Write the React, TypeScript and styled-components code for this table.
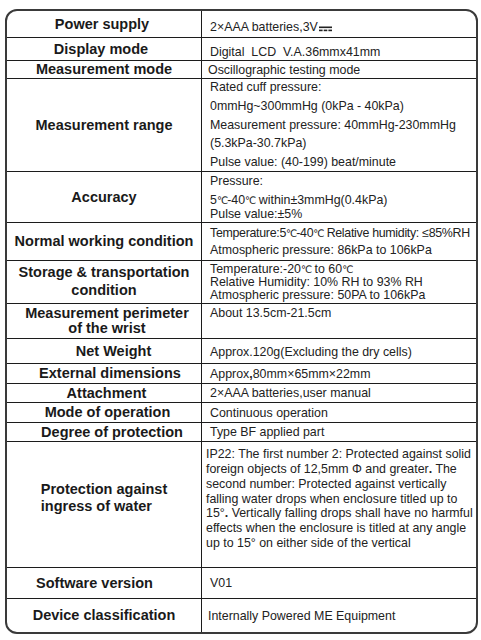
import React from 'react';
import styled, { createGlobalStyle } from 'styled-components';

const GlobalStyle = createGlobalStyle`
  html, body {
    margin: 0;
    padding: 0;
    background: #ffffff;
  }
  body {
    font-family: 'Liberation Sans', Arial, 'DejaVu Sans', sans-serif;
  }
`;

const Page = styled.div`
  width: 481px;
  box-sizing: border-box;
  padding: 9px 3px 7px 5px;
`;

const SpecTable = styled.div`
  width: 473px;
  box-sizing: border-box;
  border: 2px solid #3a3a3a;
  border-radius: 12px;
  overflow: hidden;
`;

const Row = styled.div<{ $h: number; $last?: boolean }>`
  display: grid;
  grid-template-columns: 195px 1fr;
  height: ${(p) => p.$h}px;
  box-sizing: border-box;
  border-bottom: ${(p) => (p.$last ? 'none' : '1px solid #1c1c1c')};
`;

const Label = styled.div<{ $dx: number; $lh: number; $pb: number; $left?: boolean }>`
  display: flex;
  flex-direction: column;
  justify-content: center;
  align-items: center;
  box-sizing: border-box;
  border-right: 1px solid #1c1c1c;
  padding-left: ${(p) => Math.max(0, p.$dx * 2)}px;
  padding-right: ${(p) => Math.max(0, -p.$dx * 2)}px;
  padding-bottom: ${(p) => p.$pb}px;
  font-size: 14.5px;
  font-weight: bold;
  color: #1a1a1a;
  line-height: ${(p) => p.$lh}px;
  text-align: ${(p) => (p.$left ? 'left' : 'center')};
  white-space: nowrap;
`;

const Value = styled.div<{ $top?: boolean; $pt: number; $pl: number }>`
  display: flex;
  flex-direction: column;
  justify-content: ${(p) => (p.$top ? 'flex-start' : 'center')};
  box-sizing: border-box;
  padding: ${(p) => p.$pt}px 0 0 ${(p) => p.$pl}px;
  font-size: 12.4px;
  color: #222222;
  white-space: pre;
  overflow: hidden;
`;

const Line = styled.div<{ $lh: number; $mt: number; $ls: number }>`
  line-height: ${(p) => p.$lh}px;
  margin-top: ${(p) => p.$mt}px;
  letter-spacing: ${(p) => p.$ls}px;
`;

const Dot = styled.b`
  font-weight: bold;
`;

const Celsius = styled.span`
  font-size: 10px;
  letter-spacing: -1px;
`;

const DcMark = styled.svg`
  display: inline-block;
  vertical-align: -1px;
  margin-left: 1px;
`;

const DcSymbol = () => (
  <DcMark width="13" height="6" viewBox="0 0 13 6">
    <rect x="0" y="0.5" width="13" height="1.6" fill="#222" />
    <rect x="0" y="3.6" width="3.6" height="1.6" fill="#222" />
    <rect x="4.7" y="3.6" width="3.6" height="1.6" fill="#222" />
    <rect x="9.4" y="3.6" width="3.6" height="1.6" fill="#222" />
  </DcMark>
);

const C = () => <Celsius>℃</Celsius>;

type LineSpec = { text: React.ReactNode; lh?: number; mt?: number; ls?: number };

interface Spec {
  label: React.ReactNode;
  h: number;
  lines: LineSpec[];
  dx?: number;
  labelLh?: number;
  labelPb?: number;
  labelLeft?: boolean;
  top?: boolean;
  pt?: number;
  pl?: number;
  lh?: number;
}

const specs: Spec[] = [
  {
    label: 'Power supply',
    h: 27,
    dx: -2,
    pt: 5,
    lines: [{ text: <>2×AAA batteries,3V<DcSymbol /></> }],
  },
  {
    label: 'Display mode',
    h: 23,
    dx: -3,
    pt: 5,
    lines: [{ text: 'Digital  LCD  V.A.36mmx41mm' }],
  },
  {
    label: 'Measurement mode',
    h: 18,
    pl: 6,
    lines: [{ text: 'Oscillographic testing mode' }],
  },
  {
    label: 'Measurement range',
    h: 93,
    lh: 18.7,
    lines: [
      { text: 'Rated cuff pressure:' },
      { text: '0mmHg~300mmHg (0kPa - 40kPa)' },
      { text: 'Measurement pressure: 40mmHg-230mmHg' },
      { text: '(5.3kPa-30.7kPa)' },
      { text: 'Pulse value: (40-199) beat/minute' },
    ],
  },
  {
    label: 'Accuracy',
    h: 51,
    top: true,
    pt: 2.5,
    lh: 13,
    lines: [
      { text: 'Pressure:' },
      { text: <>5<C />-40<C /> within±3mmHg(0.4kPa)</>, mt: 6.7 },
      { text: 'Pulse value:±5%', mt: 0.6 },
    ],
  },
  {
    label: 'Normal working condition',
    h: 38,
    lh: 16,
    lines: [
      { text: <>Temperature:5<C />-40<C /> Relative humidity: ≤85%RH</>, ls: -0.3 },
      { text: 'Atmospheric pressure: 86kPa to 106kPa' },
    ],
  },
  {
    label: (
      <>
        Storage &amp; transportation
        <br />
        condition
      </>
    ),
    h: 43,
    labelLh: 17.6,
    lh: 12.5,
    lines: [
      { text: <>Temperature:-20<C /> to 60<C /></> },
      { text: 'Relative Humidity: 10% RH to 93% RH' },
      { text: 'Atmospheric pressure: 50PA to 106kPa' },
    ],
  },
  {
    label: (
      <>
        Measurement perimeter
        <br />
        of the wrist
      </>
    ),
    h: 35,
    dx: 3,
    labelLh: 14.7,
    top: true,
    pt: 2.3,
    lh: 14,
    lines: [{ text: 'About 13.5cm-21.5cm' }],
  },
  {
    label: 'Net Weight',
    h: 25,
    dx: 9.5,
    pt: 2,
    lines: [{ text: 'Approx.120g(Excluding the dry cells)' }],
  },
  {
    label: 'External dimensions',
    h: 20,
    dx: 6,
    lines: [{ text: <>Approx<Dot>,</Dot>80mm×65mm×22mm</> }],
  },
  {
    label: 'Attachment',
    h: 19,
    dx: 2.5,
    lines: [{ text: '2×AAA batteries,user manual' }],
  },
  {
    label: 'Mode of operation',
    h: 20,
    dx: 3.5,
    lines: [{ text: 'Continuous operation' }],
  },
  {
    label: 'Degree of protection',
    h: 19,
    dx: 8,
    lines: [{ text: 'Type BF applied part' }],
  },
  {
    label: (
      <>
        Protection against
        <br />
        ingress of water
      </>
    ),
    h: 126,
    labelLh: 17.4,
    labelPb: 13,
    labelLeft: true,
    top: true,
    pt: 5.3,
    pl: 4,
    lh: 14.8,
    lines: [
      { text: 'IP22: The first number 2: Protected against solid' },
      { text: <>foreign objects of 12,5mm Φ and greater<Dot>.</Dot> The</> },
      { text: 'second number: Protected against vertically' },
      { text: 'falling water drops when enclosure titled up to' },
      { text: <>15°<Dot>.</Dot> Vertically falling drops shall have no harmful</> },
      { text: 'effects when the enclosure is titled at any angle' },
      { text: 'up to 15° on either side of the vertical' },
    ],
  },
  {
    label: 'Software version',
    h: 31,
    dx: -9.5,
    lines: [{ text: 'V01' }],
  },
  {
    label: 'Device classification',
    h: 33,
    pl: 6,
    lines: [{ text: 'Internally Powered ME Equipment' }],
  },
];

export default function App() {
  return (
    <Page>
      <GlobalStyle />
      <SpecTable>
        {specs.map((s, i) => (
          <Row key={i} $h={s.h} $last={i === specs.length - 1}>
            <Label
              $dx={s.dx ?? 0}
              $lh={s.labelLh ?? 17}
              $pb={s.labelPb ?? 0}
              $left={s.labelLeft}
            >
              <div>{s.label}</div>
            </Label>
            <Value $top={s.top} $pt={s.pt ?? 0} $pl={s.pl ?? 8}>
              {s.lines.map((l, j) => (
                <Line key={j} $lh={l.lh ?? s.lh ?? 16} $mt={l.mt ?? 0} $ls={l.ls ?? 0}>
                  {l.text}
                </Line>
              ))}
            </Value>
          </Row>
        ))}
      </SpecTable>
    </Page>
  );
}
